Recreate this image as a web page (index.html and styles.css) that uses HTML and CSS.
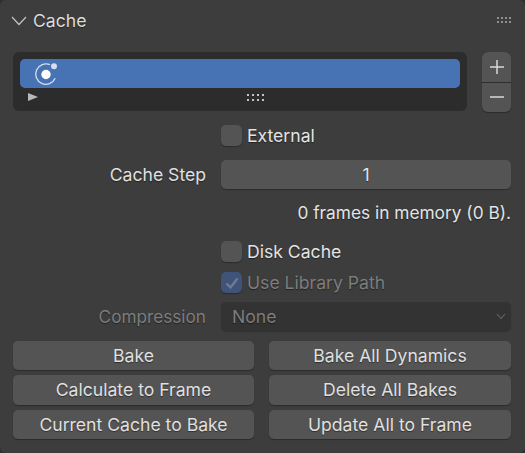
FILE: index.html
```html
<!DOCTYPE html>
<html lang="en">
<head>
    <meta charset="UTF-8">
    <meta name="viewport" content="width=device-width, initial-scale=1.0">
    <title>Cache</title>
    <link rel="stylesheet" href="styles.css">
</head>
<body>
    <div class="panel">
        <div class="panel-header">
            <svg class="chevron" width="16" height="10" viewBox="0 0 16 10"><path d="M1 1 L8 8.5 L15 1" fill="none" stroke="#c4c4c4" stroke-width="1.2"/></svg>
            <span class="panel-title">Cache</span>
            <svg class="grip" width="16" height="8" viewBox="0 0 16 8">
                <g fill="#8f8f8f">
                    <rect x="1" y="1" width="2" height="2"/><rect x="5" y="1" width="2" height="2"/><rect x="9" y="1" width="2" height="2"/><rect x="13" y="1" width="2" height="2"/>
                    <rect x="1" y="5" width="2" height="2"/><rect x="5" y="5" width="2" height="2"/><rect x="9" y="5" width="2" height="2"/><rect x="13" y="5" width="2" height="2"/>
                </g>
            </svg>
        </div>

        <div class="list-row">
            <div class="list-box">
                <div class="list-item">
                    <svg width="26" height="26" viewBox="0 0 26 26">
                        <path d="M17 3.7 A10.2 10.2 0 1 0 22.2 17.3" fill="none" stroke="#d5dff0" stroke-width="1.3"/>
                        <circle cx="13" cy="13.5" r="4.7" fill="#ffffff"/>
                        <circle cx="21" cy="5.2" r="3" fill="#d5dff0"/>
                    </svg>
                </div>
                <div class="list-footer">
                    <svg class="play" width="10" height="8" viewBox="0 0 10 8"><path d="M0 0 L10 4 L0 8 Z" fill="#b8b8b8"/></svg>
                    <svg class="list-grip" width="19" height="9" viewBox="0 0 19 9">
                        <g fill="#c4c4c4">
                            <rect x="1" y="1" width="2" height="2"/><rect x="6" y="1" width="2" height="2"/><rect x="11" y="1" width="2" height="2"/><rect x="16" y="1" width="2" height="2"/>
                            <rect x="1" y="6" width="2" height="2"/><rect x="6" y="6" width="2" height="2"/><rect x="11" y="6" width="2" height="2"/><rect x="16" y="6" width="2" height="2"/>
                        </g>
                    </svg>
                </div>
            </div>
            <div class="list-buttons">
                <div class="list-btn">
                    <svg width="16" height="16" viewBox="0 0 16 16"><path d="M8 1 V15 M1 8 H15" stroke="#d8d8d8" stroke-width="1.5"/></svg>
                </div>
                <div class="list-btn">
                    <svg width="16" height="16" viewBox="0 0 16 16"><path d="M1 8 H15" stroke="#d8d8d8" stroke-width="1.5"/></svg>
                </div>
            </div>
        </div>

        <div class="prop check-prop ext-prop">
            <span class="checkbox"></span>
            <span class="check-label">External</span>
        </div>

        <div class="prop step-prop">
            <span class="prop-label">Cache Step</span>
            <div class="field number-field">1</div>
        </div>

        <div class="info">0 frames in memory (0 B).</div>

        <div class="prop check-prop disk-prop">
            <span class="checkbox"></span>
            <span class="check-label">Disk Cache</span>
        </div>

        <div class="prop check-prop lib-prop disabled">
            <span class="checkbox checked">
                <svg width="16" height="14" viewBox="0 0 16 14"><path d="M2.5 7.5 L6.5 11.5 L13.5 2.5" fill="none" stroke="#6f7c94" stroke-width="2.2"/></svg>
            </span>
            <span class="check-label">Use Library Path</span>
        </div>

        <div class="prop comp-prop disabled">
            <span class="prop-label">Compression</span>
            <div class="field select-field">
                <span>None</span>
                <svg width="10" height="7" viewBox="0 0 10 7"><path d="M1 1 L5 5.5 L9 1" fill="none" stroke="#666666" stroke-width="1.1"/></svg>
            </div>
        </div>

        <div class="button-grid">
            <div class="btn">Bake</div>
            <div class="btn">Bake All Dynamics</div>
            <div class="btn">Calculate to Frame</div>
            <div class="btn">Delete All Bakes</div>
            <div class="btn">Current Cache to Bake</div>
            <div class="btn">Update All to Frame</div>
        </div>
    </div>
</body>
</html>
```

FILE: styles.css
```css
html, body {
    margin: 0;
    padding: 0;
    height: 100%;
}
body {
    background-color: #303030;
    font-family: Inter, "Noto Sans", sans-serif;
    font-size: 17.6px;
    color: #e4e4e4;
    overflow: hidden;
}
.panel {
    box-sizing: border-box;
    height: 453px;
    background-color: #3d3d3d;
    border-radius: 6px;
    padding: 0 14px 0 13px;
    text-shadow: 0 1px 1px rgba(0, 0, 0, 0.45);
}
.panel-header {
    display: flex;
    align-items: center;
    height: 41px;
}
.chevron {
    margin-left: -2px;
    margin-right: 6px;
}
.panel-title {
    flex: 1;
    color: #dcdcdc;
}
.grip {
    margin-right: -1px;
    margin-bottom: 2px;
}
.list-row {
    display: flex;
    margin-top: 11px;
}
.list-box {
    width: 454px;
    height: 59px;
    box-sizing: border-box;
    padding: 7px 7px 0;
    background-color: #2c2c2c;
    border-radius: 6px;
}
.list-item {
    height: 29px;
    display: flex;
    align-items: center;
    padding-left: 13px;
    background-color: #4772b3;
    border-radius: 5px;
}
.list-footer {
    display: flex;
    align-items: center;
    justify-content: space-between;
    height: 18px;
    padding-left: 8px;
}
.list-grip {
    margin-right: 195px;
}
.list-buttons {
    margin-left: 15px;
    width: 29px;
    height: 60px;
    display: flex;
    flex-direction: column;
    gap: 1px;
    border-radius: 6px;
    overflow: hidden;
    box-shadow: 0 1px 1px rgba(0, 0, 0, 0.3);
    background-color: #2e2e2e;
}
.list-btn {
    flex: 1;
    display: flex;
    align-items: center;
    justify-content: center;
    background-color: #545454;
}
.prop {
    display: flex;
    align-items: center;
}
.check-prop {
    padding-left: 208px;
    height: 21px;
}
.ext-prop {
    margin-top: 13px;
}
.disk-prop {
    margin-top: 16px;
}
.lib-prop {
    margin-top: 10px;
}
.checkbox {
    box-sizing: border-box;
    width: 21px;
    height: 21px;
    margin-right: 5px;
    display: flex;
    align-items: center;
    justify-content: center;
    background-color: #545454;
    border-radius: 5px;
    box-shadow: 0 1px 1px rgba(0, 0, 0, 0.3);
}
.checkbox.checked {
    background-color: #3f5478;
}
.check-label {
    color: #e4e4e4;
}
.step-prop {
    margin-top: 14px;
}
.comp-prop {
    margin-top: 9px;
}
.prop-label {
    width: 193px;
    text-align: right;
    margin-right: 15px;
    color: #e0e0e0;
}
.comp-prop .prop-label {
    font-size: 17.2px;
}
.field {
    width: 290px;
    height: 29px;
    box-sizing: border-box;
    border-radius: 5px;
    display: flex;
    align-items: center;
}
.number-field {
    justify-content: center;
    background-color: #545454;
    box-shadow: 0 1px 1px rgba(0, 0, 0, 0.3);
}
.select-field {
    justify-content: space-between;
    padding: 0 5px 0 11px;
    background-color: #333333;
    box-shadow: 0 1px 1px rgba(0, 0, 0, 0.2);
}
.info {
    margin-top: 12px;
    height: 24px;
    line-height: 24px;
    text-align: right;
    color: #e4e4e4;
    font-size: 17.3px;
}
.disabled .check-label,
.disabled .prop-label,
.disabled .field {
    color: #7d7d7d;
}
.button-grid {
    margin-top: 10px;
    display: grid;
    grid-template-columns: 241px 242px;
    column-gap: 15px;
    row-gap: 5px;
}
.btn {
    height: 29.33px;
    display: flex;
    align-items: center;
    justify-content: center;
    background-color: #545454;
    border-radius: 5px;
    color: #e0e0e0;
    box-shadow: 0 1px 1px rgba(0, 0, 0, 0.3);
}
```
